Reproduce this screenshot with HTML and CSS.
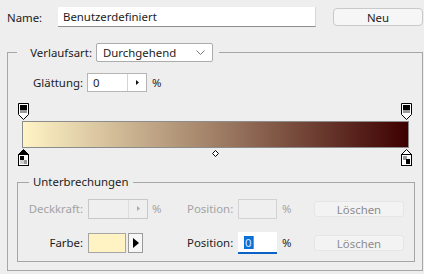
FILE: index.html
```html
<!DOCTYPE html>
<html lang="de">
<head>
    <meta charset="UTF-8">
    <meta name="viewport" content="width=device-width, initial-scale=1.0">
    <title>Verlauf</title>
    <link rel="stylesheet" href="styles.css">
</head>
<body>
    <div class="name-row">
        <span class="name-label">Name:</span>
        <div class="name-field">Benutzerdefiniert</div>
        <button class="btn-new">Neu</button>
    </div>

    <fieldset class="frame outer">
        <legend class="type-legend">
            <span class="type-label">Verlaufsart:</span>
            <div class="dropdown">
                <span>Durchgehend</span>
                <svg width="9" height="6" viewBox="0 0 9 6"><path d="M0.5 0.5l4 4l4 -4" fill="none" stroke="#777"/></svg>
            </div>
        </legend>

        <div class="smooth-row">
            <span class="smooth-label">Glättung:</span>
            <div class="spinner">
                <span class="spin-value">0</span>
                <span class="spin-arrow"><svg width="3" height="5" viewBox="0 0 3 5"><path d="M0 0l3 2.5l-3 2.5z" fill="#111"/></svg></span>
            </div>
            <span class="unit">%</span>
        </div>

        <div class="ramp">
            <div class="stops">
                <svg width="11" height="18" viewBox="0 0 11 18">
                    <path d="M0.5 0.5h10v11l-5 5l-5 -5z" fill="#fff" stroke="#000"/>
                    <rect x="2" y="2" width="7" height="5" fill="#000"/>
                    <rect x="2" y="7" width="7" height="3" fill="#9a9a9a"/>
                </svg>
                <svg width="11" height="18" viewBox="0 0 11 18">
                    <path d="M0.5 0.5h10v11l-5 5l-5 -5z" fill="#fff" stroke="#000"/>
                    <rect x="2" y="2" width="7" height="5" fill="#000"/>
                    <rect x="2" y="7" width="7" height="3" fill="#9a9a9a"/>
                </svg>
            </div>
            <div class="bar"></div>
            <div class="stops">
                <svg width="11" height="18" viewBox="0 0 11 18">
                    <path d="M0.5 6.5l5 -5l5 5z" fill="#000" stroke="#000"/>
                    <rect x="0.5" y="6.5" width="10" height="11" fill="#fff" stroke="#000"/>
                    <rect x="2" y="8" width="4" height="4" fill="#000"/>
                    <rect x="6" y="12" width="3" height="4" fill="#9a9a9a"/>
                    <rect x="2" y="12" width="4" height="4" fill="#cfcfcf"/>
                </svg>
                <svg class="midpoint" width="7" height="7" viewBox="0 0 7 7"><path d="M3.5 0.5l3 3l-3 3l-3 -3z" fill="#fff" stroke="#000"/></svg>
                <svg width="11" height="18" viewBox="0 0 11 18">
                    <path d="M0.5 6.5l5 -5l5 5z" fill="#fff" stroke="#000"/>
                    <rect x="0.5" y="6.5" width="10" height="11" fill="#fff" stroke="#000"/>
                    <rect x="2" y="8" width="4" height="4" fill="#9a9a9a"/>
                    <rect x="5" y="11" width="4" height="5" fill="#000"/>
                </svg>
            </div>
        </div>

        <fieldset class="frame inner">
            <legend class="stops-legend">Unterbrechungen</legend>
            <div class="stop-grid">
                <span class="cell-label off">Deckkraft:</span>
                <div class="spinner off">
                    <span class="spin-value"></span>
                    <span class="spin-arrow"><svg width="3" height="5" viewBox="0 0 3 5"><path d="M0 0l3 2.5l-3 2.5z" fill="#aaa"/></svg></span>
                </div>
                <span class="unit off">%</span>
                <span class="pos-label off">Position:</span>
                <div class="pos-field off"></div>
                <span class="unit off">%</span>
                <button class="btn-delete">Löschen</button>

                <span class="cell-label">Farbe:</span>
                <div class="color-pick">
                    <div class="swatch"></div>
                    <div class="swatch-arrow"><svg width="6" height="10" viewBox="0 0 6 10"><path d="M0 0l6 5l-6 5z" fill="#000"/></svg></div>
                </div>
                <span></span>
                <span class="pos-label">Position:</span>
                <div class="pos-field active"><span class="selected">0</span></div>
                <span class="unit">%</span>
                <button class="btn-delete">Löschen</button>
            </div>
        </fieldset>
    </fieldset>
</body>
</html>
```

FILE: styles.css
```css
body {
    margin: 0;
    width: 424px;
    height: 274px;
    overflow: hidden;
    background-color: #eeeeee;
    font-family: "Noto Sans", sans-serif;
    font-size: 11.4px;
    color: #1c1c1c;
}
.name-row {
    display: flex;
    align-items: center;
    padding: 7px 0 0 7px;
}
.name-label {
    width: 51px;
}
.name-field {
    width: 258px;
    height: 20px;
    box-sizing: border-box;
    padding-left: 5px;
    line-height: 19px;
    background: #fff;
    border-bottom: 1px solid #8e8e8e;
    border-right: 1px solid #d6d6d6;
}
.btn-new {
    margin-left: 17px;
    width: 90px;
    height: 18px;
    padding: 0;
    font: inherit;
    color: #1c1c1c;
    background: #f6f6f6;
    border: 1px solid #c9c9c9;
    border-radius: 4px;
}
.frame {
    margin: 0;
    border: 1px solid #a6a6a6;
    box-sizing: border-box;
    min-width: 0;
}
.outer {
    margin: 16px 0 0 7px;
    width: 416px;
    padding: 0 7px 8px 9px;
}
.type-legend {
    display: flex;
    align-items: center;
    padding: 0 6px 0 0;
    margin-left: 0;
}
.type-label {
    width: 79px;
    padding-right: 4px;
    box-sizing: border-box;
    text-align: right;
}
.dropdown {
    display: flex;
    align-items: center;
    justify-content: space-between;
    width: 117px;
    height: 19px;
    box-sizing: border-box;
    padding: 0 7px 0 6px;
    background: #fff;
    border: 1px solid #acacac;
    border-radius: 2px;
}
.smooth-row {
    display: flex;
    align-items: center;
    margin-top: 11px;
}
.smooth-label {
    width: 70px;
    padding-right: 4px;
    box-sizing: border-box;
    text-align: right;
}
.spinner {
    display: flex;
    width: 60px;
    height: 19px;
    box-sizing: border-box;
    background: #fff;
    border: 1px solid #b5b5b5;
}
.spin-value {
    flex: 1;
    padding-left: 5px;
    line-height: 17px;
}
.spin-arrow {
    width: 18px;
    display: flex;
    align-items: center;
    justify-content: center;
    border-left: 1px solid #d4d4d4;
}
.unit {
    margin-left: 5px;
}
.ramp {
    margin-top: 11px;
}
.stops {
    display: flex;
    justify-content: space-between;
    align-items: flex-start;
    padding: 0 3px 0 1px;
    height: 18px;
}
.midpoint {
    margin-top: 2px;
}
.bar {
    margin-left: 5px;
    width: 387px;
    height: 27px;
    box-sizing: border-box;
    border: 1px solid #8c8c8c;
    background: linear-gradient(to right, #fff4c6, #a07f66 50%, #3d0000);
}
.inner {
    margin-top: 8px;
    width: 398px;
    padding: 0 0 8px 0;
}
.stops-legend {
    margin-left: 11px;
    padding: 0 4px;
    line-height: 16px;
}
.stop-grid {
    display: grid;
    grid-template-columns: 70px 59px 40px 51px 39px 37px 90px;
    grid-template-rows: 21px 21px;
    row-gap: 13px;
    align-items: center;
    margin-top: 8px;
}
.cell-label {
    text-align: right;
    padding-right: 5px;
}
.off {
    color: #a3a3a3;
}
.spinner.off {
    height: 20px;
    background: #efefef;
    border-color: #c8c8c8;
}
.spinner.off .spin-arrow {
    border-left-color: #dcdcdc;
}
.pos-field {
    height: 20px;
    box-sizing: border-box;
}
.pos-field.off {
    background: #efefef;
    border: 1px solid #d2d2d2;
}
.pos-field.active {
    height: 22px;
    background: #fff;
    border-bottom: 2px solid #0a63c4;
    padding: 3px 0 0 6px;
}
.selected {
    display: inline-block;
    padding: 0 1px;
    line-height: 13px;
    background: #0a6fd6;
    color: #dce9ff;
    border-right: 1px solid #e07b1a;
}
.btn-delete {
    width: 90px;
    height: 16px;
    padding: 0;
    font: inherit;
    color: #8c8c8c;
    background: #f3f3f3;
    border: 1px solid #e6e6e6;
    border-radius: 3px;
}
.color-pick {
    display: flex;
    gap: 2px;
}
.swatch {
    width: 38px;
    height: 20px;
    box-sizing: border-box;
    background: #fff3c4;
    border: 1px solid #a6a6a6;
}
.swatch-arrow {
    width: 15px;
    height: 20px;
    box-sizing: border-box;
    display: flex;
    align-items: center;
    justify-content: center;
    background: #f6f6f6;
    border: 1px solid #9a9a9a;
}
```
